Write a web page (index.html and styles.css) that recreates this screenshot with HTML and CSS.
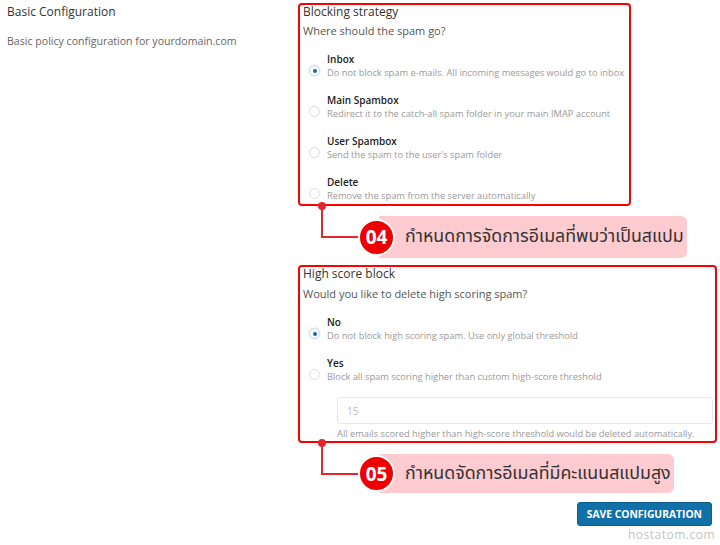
FILE: index.html
```html
<!DOCTYPE html>
<html lang="en">
<head>
  <meta charset="UTF-8" />
  <title>Basic Configuration</title>
  <link rel="stylesheet" href="styles.css">
</head>
<body>

  <div class="page">
    <div class="intro">
      <h3>Basic Configuration</h3>
      <p>Basic policy configuration for yourdomain.com</p>
    </div>

    <div class="settings">
      <div class="group group-blocking">
        <h4>Blocking strategy</h4>
        <p class="question">Where should the spam go?</p>

        <div class="option">
          <span class="radio checked"></span>
          <div>
            <div class="option-title">Inbox</div>
            <div class="option-desc">Do not block spam e-mails. All incoming messages would go to inbox</div>
          </div>
        </div>
        <div class="option">
          <span class="radio"></span>
          <div>
            <div class="option-title">Main Spambox</div>
            <div class="option-desc">Redirect it to the catch-all spam folder in your main IMAP account</div>
          </div>
        </div>
        <div class="option">
          <span class="radio"></span>
          <div>
            <div class="option-title">User Spambox</div>
            <div class="option-desc">Send the spam to the user's spam folder</div>
          </div>
        </div>
        <div class="option">
          <span class="radio"></span>
          <div>
            <div class="option-title">Delete</div>
            <div class="option-desc">Remove the spam from the server automatically</div>
          </div>
        </div>
      </div>

      <div class="callout callout-04">
        <span class="num">04</span>
        <span class="note">กำหนดการจัดการอีเมลที่พบว่าเป็นสแปม</span>
      </div>

      <div class="group group-score">
        <h4>High score block</h4>
        <p class="question">Would you like to delete high scoring spam?</p>

        <div class="option">
          <span class="radio checked"></span>
          <div>
            <div class="option-title">No</div>
            <div class="option-desc">Do not block high scoring spam. Use only global threshold</div>
          </div>
        </div>
        <div class="option">
          <span class="radio"></span>
          <div>
            <div class="option-title">Yes</div>
            <div class="option-desc">Block all spam scoring higher than custom high-score threshold</div>
          </div>
        </div>

        <input class="threshold" type="text" placeholder="15">
        <div class="hint">All emails scored higher than high-score threshold would be deleted automatically.</div>
      </div>

      <div class="callout callout-05">
        <span class="num">05</span>
        <span class="note">กำหนดจัดการอีเมลที่มีคะแนนสแปมสูง</span>
      </div>

      <div class="actions">
        <button type="button">SAVE CONFIGURATION</button>
      </div>
      <div class="watermark">hostatom.com</div>
    </div>
  </div>

</body>
</html>
```

FILE: styles.css
```css
body {
  margin: 0;
  padding: 0;
  font-family: "Open Sans", Arial, sans-serif;
  background: #fff;
  color: #333;
}

.page {
  display: grid;
  grid-template-columns: 298px 419px;
}

/* left column */
.intro {
  padding: 5px 0 0 7px;
}

.intro h3 {
  margin: 0;
  font-size: 12px;
  line-height: 14px;
  font-weight: 400;
  color: #333;
}

.intro p {
  margin: 15px 0 0;
  font-size: 10.6px;
  line-height: 14px;
  color: #666;
}

/* right column */
.settings {
  padding-top: 3px;
}

.group {
  border: 2px solid #ff0000;
  border-radius: 4px;
  padding: 0 0 0 3px;
}

.group-blocking {
  width: 326px;
  padding-bottom: 2px;
}

.group h4 {
  margin: 0;
  font-size: 12px;
  line-height: 14px;
  font-weight: 400;
  color: #333;
}

.question {
  margin: 5px 0 0;
  font-size: 11px;
  line-height: 14px;
  color: #555;
}

.group-score .question {
  margin-top: 6px;
}

.option {
  display: flex;
  align-items: center;
  gap: 7px;
  padding-left: 6px;
  margin-top: 14px;
}

.option-title {
  font-size: 10px;
  line-height: 14px;
  font-weight: 600;
  color: #222;
}

.option-desc {
  font-size: 9.3px;
  line-height: 13px;
  color: #999;
}

.radio {
  width: 9px;
  height: 9px;
  border: 1px solid #dcdcdc;
  border-radius: 50%;
  background: #fff;
  margin-top: 10px;
  flex: none;
  position: relative;
}

.radio.checked {
  border-color: #c9d9e8;
  box-shadow: 0 0 0 1px #eef4fa;
}

.radio.checked::after {
  content: '';
  position: absolute;
  left: 2.5px;
  top: 2.5px;
  width: 4px;
  height: 4px;
  border-radius: 50%;
  background: #1468a8;
}

.threshold {
  display: block;
  box-sizing: border-box;
  width: 376px;
  height: 27px;
  margin: 14px 0 0 34px;
  padding: 0 9px;
  border: 1px solid #e8e8e8;
  border-radius: 3px;
  font-family: inherit;
  font-size: 10px;
  color: #bbb;
  background: #fff;
}

.threshold::placeholder {
  color: #bbb;
}

.hint {
  margin: 4px 0 0 34px;
  font-size: 9.3px;
  line-height: 12px;
  color: #999;
  padding-bottom: 1px;
}

/* annotation callouts */
.callout {
  position: relative;
  display: flex;
  align-items: center;
  margin-left: 60px;
}

.callout-04 {
  margin-top: 10px;
  margin-bottom: 7px;
}

.callout-05 {
  margin-top: 11px;
}

.callout::before {
  content: '';
  position: absolute;
  left: -37px;
  bottom: 50%;
  width: 37px;
  height: 34px;
  border-left: 2px solid #e5262c;
  border-bottom: 2px solid #e5262c;
  box-sizing: border-box;
  margin-bottom: -1px;
}

.callout::after {
  content: '';
  position: absolute;
  left: -40px;
  top: -14px;
  width: 8px;
  height: 8px;
  border-radius: 50%;
  background: #e5262c;
}

.callout-05::after {
  top: -15px;
}

.num {
  position: relative;
  z-index: 1;
  width: 33px;
  height: 33px;
  border-radius: 50%;
  background: #ee0000;
  border: 2px solid #fff;
  color: #fff;
  font-weight: 700;
  font-size: 19px;
  display: flex;
  align-items: center;
  justify-content: center;
  flex: none;
}

.note {
  margin-left: -16px;
  padding: 0 3px 0 26px;
  background: #fecbd0;
  border-radius: 0 6px 6px 0;
  font-family: "Noto Sans Thai", "Noto Sans", "DejaVu Sans", sans-serif;
  font-size: 17.8px;
  line-height: 42px;
  color: #333;
}

.callout-05 .note {
  line-height: 39px;
}

.actions {
  display: flex;
  justify-content: flex-end;
  margin-top: 9px;
  padding-right: 5px;
}

button {
  background: #1170a8;
  color: #fff;
  border: 1px solid #0d5f90;
  border-radius: 3px;
  font-family: inherit;
  font-weight: 700;
  font-size: 10.3px;
  padding: 0 9px;
  height: 24px;
  cursor: pointer;
}

.watermark {
  text-align: right;
  padding-right: 2px;
  margin-top: 1px;
  font-size: 12px;
  line-height: 16px;
  letter-spacing: 0.5px;
  color: #c4c4c4;
}
```
